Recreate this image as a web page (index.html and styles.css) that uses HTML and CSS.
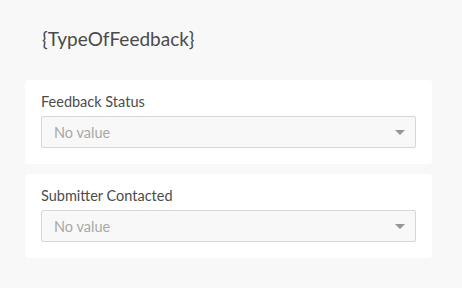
FILE: index.html
```html
<!DOCTYPE html>
<html>
<head>
<meta charset="utf-8">
<link rel="stylesheet" href="styles.css">
</head>
<body>
<div class="page">
  <h1 class="title">{TypeOfFeedback}</h1>
  <div class="card">
    <div class="label">Feedback Status</div>
    <div class="select">
      <span class="placeholder">No value</span>
      <span class="arrow"></span>
    </div>
  </div>
  <div class="card">
    <div class="label">Submitter Contacted</div>
    <div class="select">
      <span class="placeholder">No value</span>
      <span class="arrow"></span>
    </div>
  </div>
</div>
</body>
</html>
```
FILE: styles.css
```css
html, body {
  margin: 0;
  padding: 0;
  background: #f8f8f8;
}
body {
  font-family: Lato, "Noto Sans", sans-serif;
  color: #4c4c4c;
}
.page {
  padding: 0 30px 0 25px;
  display: flex;
  flex-direction: column;
  gap: 10px;
}
.title {
  margin: 0;
  height: 70px;
  box-sizing: border-box;
  padding: 27px 0 0 17px;
  font-size: 19px;
  line-height: 24px;
  font-weight: 400;
  color: #4a4a4a;
}
.card {
  background: #fff;
  border-radius: 4px;
  padding: 12px 16px 16px 16px;
  display: flex;
  flex-direction: column;
  gap: 4px;
}
.label {
  font-size: 14.5px;
  line-height: 20px;
  color: #4c4c4c;
}
.select {
  height: 32px;
  box-sizing: border-box;
  border: 1px solid #d6d6d6;
  border-radius: 2px;
  background: #f8f8f8;
  display: flex;
  align-items: center;
  justify-content: space-between;
  padding: 0 10px 0 12px;
}
.placeholder {
  font-size: 14.5px;
  color: #a8a8a8;
}
.arrow {
  width: 0;
  height: 0;
  border-left: 5px solid transparent;
  border-right: 5px solid transparent;
  border-top: 5px solid #959595;
}
```
